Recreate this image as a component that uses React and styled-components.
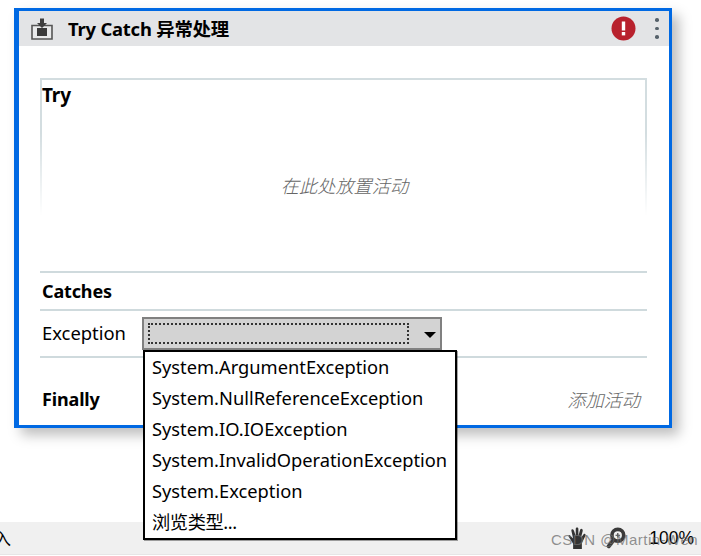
import React from "react";
import styled, { createGlobalStyle } from "styled-components";

const Global = createGlobalStyle`
  html, body { margin: 0; padding: 0; background: #fff; }
  body { font-family: "Noto Sans", "Noto Sans CJK SC", sans-serif; color: #000; overflow: hidden; }
`;
const Page = styled.div`
  position: relative; width: 701px; height: 556px; overflow: hidden;
  display: flex; flex-direction: column; align-items: flex-start;
`;
const Card = styled.div`
  margin: 8px 0 0 14px; width: 658px; height: 420px; box-sizing: border-box;
  border: 3px solid #0069e3; border-left-width: 5px;
  box-shadow: 7px 7px 12px rgba(0,0,0,.26);
  background: #fff; display: flex; flex-direction: column;
`;
const Header = styled.div`
  height: 35px; background: #e3e4e6; display: flex; align-items: center; flex: none;
  padding: 0 10px 0 11px;
`;
const Title = styled.div`
  margin-left: 14px; font-size: 18.4px; font-weight: 700; flex: 1; letter-spacing: -.2px;
  line-height: 35px; white-space: nowrap;
`;
const Kebab = styled.div`
  display: flex; flex-direction: column; gap: 5.2px; margin-left: 19px;
  i { width: 3.6px; height: 3.6px; border-radius: 50%; background: #56616a; display: block; }
`;
const Body = styled.div`
  flex: 1; padding: 32px 22px 0 21px; display: flex; flex-direction: column;
`;
const TryBox = styled.div`
  position: relative; height: 193px; flex: none; padding: 4px 2px 0;
  box-sizing: border-box;
  &::before {
    content: ""; position: absolute; left: 0; right: 0; top: 0; height: 138px;
    border: 2px solid #d3dde0; border-bottom: 0; box-sizing: border-box;
    -webkit-mask-image: linear-gradient(#000 0, #000 40%, transparent 100%);
    mask-image: linear-gradient(#000 0, #000 40%, transparent 100%);
  }
`;
const Label = styled.div`
  font-size: ${p => p.$size || 18}px; font-weight: 700; line-height: 26px; letter-spacing: -.15px;
`;
const Hint = styled.div`
  font-size: 18.2px; font-style: italic; color: #666; font-family: "Noto Sans CJK SC", sans-serif;
  font-weight: 300; white-space: nowrap; line-height: 24px;
`;
const DropHint = styled(Hint)`
  text-align: center; margin-top: 65px; padding-left: 2px;
`;
const Row = styled.div`
  border-top: 2px solid #cfdadd; padding-left: 2px; display: flex; align-items: center; flex: none;
  height: ${p => p.$h}px; box-sizing: border-box;
`;
const RegularLabel = styled.div`
  font-size: 18.4px; line-height: 26px; width: 100px; margin-top: -1px;
`;
const Combo = styled.div`
  width: 300px; height: 33px; box-sizing: border-box; background: #d3d3d3;
  border: 2px solid #808080; padding: 4px; display: flex; align-items: stretch;
`;
const FocusRect = styled.div`
  width: 262px; border: 2px dotted #333; box-sizing: border-box;
`;
const Arrow = styled.div`
  width: 0; height: 0; margin: 9px 0 0 15px;
  border-left: 6px solid transparent; border-right: 6px solid transparent; border-top: 6px solid #000;
`;
const FinallyRow = styled.div`
  display: flex; justify-content: space-between; align-items: center;
  padding: 28px 7px 0 2px;
`;
const StatusBar = styled.div`
  margin-top: 94px; width: 701px; height: 33px; background: #f0f0f0; flex: none;
  display: flex; align-items: center; justify-content: flex-end; position: relative;
  box-sizing: border-box; border-bottom: 1px solid #e6e6e6; padding-right: 7px;
`;
const ClippedText = styled.div`
  position: absolute; left: -6px; top: 5px; font-size: 17px; line-height: 24px;
`;
const StatusIcons = styled.div`
  display: flex; align-items: center; gap: 18px; margin-right: 23px;
`;
const Percent = styled.div`
  font-size: 17.5px; font-family: "Liberation Sans", sans-serif;
`;
const Watermark = styled.div`
  position: absolute; left: 551px; top: 530px; font-size: 15px; line-height: 20px;
  font-family: "Liberation Sans", sans-serif; color: rgba(110,110,110,.75); white-space: nowrap;
  letter-spacing: .5px;
`;
const Menu = styled.div`
  position: absolute; left: 143px; top: 350px; width: 314px; height: 190px;
  box-sizing: border-box; border: 2px solid #000; background: #fff; padding: 0 0 0 7px;
  box-shadow: 1px 1px 0 rgba(0,0,0,.35);
`;
const MenuItem = styled.div`
  height: 31px; line-height: 30px; font-size: 18.3px; white-space: nowrap;
  letter-spacing: ${p => p.$tight ? "-.45px" : "0"};
`;

const BoxIcon = () => (
  <svg width="24" height="24" viewBox="0 0 24 24" fill="none">
    <path d="M2 8.5h20v13.5H2z" stroke="#555" strokeWidth="1.6" fill="#e9eaeb" />
    <rect x="7" y="11" width="10" height="8" fill="#3a3a3a" />
    <path d="M10 1.5h4v4.5h3L12 11 7 6h3z" fill="#3f3f3f" />
  </svg>
);
const AlertIcon = () => (
  <svg width="25" height="25" viewBox="0 0 25 25">
    <circle cx="12.5" cy="12.5" r="12" fill="#b8212d" />
    <rect x="10.8" y="5.5" width="3.4" height="9" fill="#fff" />
    <rect x="10.8" y="16" width="3.4" height="3.4" fill="#fff" />
  </svg>
);
const HandIcon = () => (
  <svg width="21" height="25" viewBox="0 0 24 26">
    <path d="M7 25v-6L2 11c-1-2 1-3 2-1l3 3L5 4c0-2 2-2 3 0l2 6V2c0-2 3-2 3 0v8l2-7c1-2 3-1 3 1l-2 8 3-4c1-1 3 0 2 2l-4 8v7z" fill="#333" />
  </svg>
);
const ZoomIcon = () => (
  <svg width="20" height="22" viewBox="0 0 22 24" fill="none">
    <circle cx="13" cy="9" r="6.5" stroke="#3a3a3a" strokeWidth="4" />
    <path d="M10.5 9h5M13 6.5v5" stroke="#3a3a3a" strokeWidth="1.2" />
    <path d="M8.5 14 3 21" stroke="#3a3a3a" strokeWidth="4.5" strokeLinecap="round" />
  </svg>
);

const items = [
  "System.ArgumentException",
  "System.NullReferenceException",
  "System.IO.IOException",
  "System.InvalidOperationException",
  "System.Exception",
];

export default function App() {
  return (
    <Page>
      <Global />
      <Card>
        <Header>
          <BoxIcon />
          <Title>Try Catch 异常处理</Title>
          <AlertIcon />
          <Kebab><i /><i /><i /></Kebab>
        </Header>
        <Body>
          <TryBox>
            <Label $size={19}>Try</Label>
            <DropHint>在此处放置活动</DropHint>
          </TryBox>
          <Row $h={38}><Label>Catches</Label></Row>
          <Row $h={47}>
            <RegularLabel>Exception</RegularLabel>
            <Combo><FocusRect /><Arrow /></Combo>
          </Row>
          <Row $h={0} />
          <FinallyRow>
            <Label>Finally</Label>
            <Hint>添加活动</Hint>
          </FinallyRow>
        </Body>
      </Card>
      <StatusBar>
        <ClippedText>入</ClippedText>
        <StatusIcons><HandIcon /><ZoomIcon /></StatusIcons>
        <Percent>100%</Percent>
      </StatusBar>
      <Watermark>CSDN @Martin-Wen</Watermark>
      <Menu>
        {items.map(t => <MenuItem key={t}>{t}</MenuItem>)}
        <MenuItem $tight>浏览类型...</MenuItem>
      </Menu>
    </Page>
  );
}
